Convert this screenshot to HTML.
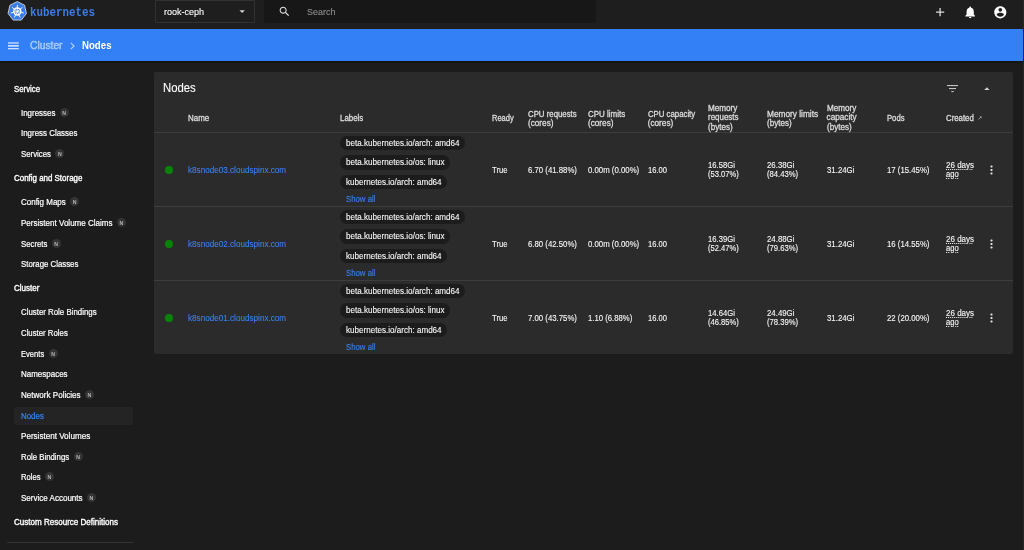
<!DOCTYPE html>
<html lang="en"><head><meta charset="utf-8"><title>Kubernetes Dashboard</title>
<style>
*{box-sizing:border-box;margin:0;padding:0}
html,body{width:1024px;height:550px;overflow:hidden;background:#1c1c1c;font-family:"Liberation Sans",Arial,sans-serif;color:#fff}
body{position:relative}
.abs,.t{position:absolute}
.t{white-space:nowrap;transform-origin:0 50%;-webkit-text-stroke:0.2px currentColor}
#txt{left:0;top:0;width:1024px;height:550px;will-change:transform}
#top{left:0;top:0;width:1024px;height:29px;background:#1e1e1e}
#bar{left:0;top:28.5px;width:1023.2px;height:32.2px;background:#3380f6;box-shadow:0 1px 2px -0.5px rgba(0,0,0,.5)}
.logo{font-family:"Liberation Mono",monospace;color:#3a7ce8}
#ns{left:155px;top:-0.2px;width:99.5px;height:23.2px;border:1px solid #323232;border-radius:1px}
#search{left:263.8px;top:0.3px;width:332.7px;height:22.6px;background:#171717;border-radius:1px}
.sh{color:#fff;-webkit-text-stroke:0.35px currentColor}
.si{color:#fff}
.sel{color:#3a80ee}
.nb{-webkit-text-stroke:0;width:9px;height:9px;border-radius:50%;background:#343434;color:#b4b4b4;font-size:5.2px;line-height:10.4px;overflow:hidden;text-align:center;font-weight:bold}
#selbg{left:14px;top:406.6px;width:119px;height:18.6px;background:#242424;border-radius:2px}
#card{left:153.5px;top:72px;width:859px;height:282px;background:#2b2b2b;border-radius:2px}
.hl{left:153.5px;width:859px;height:1px;background:#3d3d3d}
.th{color:#dcdcdc;-webkit-text-stroke:0.3px currentColor}
.td{color:#fafafa;-webkit-text-stroke:0.1px currentColor}
.lnk{color:#3a80ee}
.chip{left:340px;height:14.4px;border-radius:7.2px;background:#1c1c1c}
.dot{width:7.6px;height:7.6px;border-radius:50%;background:#078307;left:165px}
.ul{text-decoration:underline dotted;text-decoration-thickness:0.8px;text-underline-offset:0.6px}
</style></head><body>
<div class="abs" id="top"></div>
<div class="abs" style="left:1023px;top:0;width:1px;height:550px;background:#272727"></div>
<svg class="abs" style="left:0;top:0" width="40" height="28" viewBox="0 0 40 28">
<polygon points="17.25,1.56 24.60,5.23 26.42,13.47 21.33,20.08 13.17,20.08 8.08,13.47 9.90,5.23" fill="#3a7ce8" stroke="#e6e6e6" stroke-width="0.8" stroke-linejoin="round"/>
<circle cx="17.30" cy="11.50" r="3.500" fill="none" stroke="#fff" stroke-width="1.400"/>
<path d="M17.30 10.30L17.30 5.20M18.24 10.75L22.23 7.57M18.47 11.77L23.44 12.90M17.82 12.58L20.03 17.18M16.78 12.58L14.57 17.18M16.13 11.77L11.16 12.90M16.36 10.75L12.37 7.57" stroke="#fff" stroke-width="0.900" fill="none" stroke-linecap="round"/>
<circle cx="17.30" cy="11.50" r="1" fill="#fff"/>
</svg>
<div class="abs" id="ns"></div>
<svg class="abs" style="left:239.200px;top:9.800px" width="6.300" height="3.400" viewBox="0 0 7 4"><path d="M0.300 0.300H6.700L3.500 3.500Z" fill="#d0d0d0"/></svg>
<div class="abs" id="search"></div>
<svg class="abs" style="left:278.300px;top:5px" width="13" height="13" viewBox="0 0 24 24"><path fill="#e0e0e0" d="M15.500 14h-.79l-.28-.27C15.410 12.590 16 11.110 16 9.500 16 5.910 13.090 3 9.500 3S3 5.910 3 9.500 5.910 16 9.500 16c1.610 0 3.090-.59 4.230-1.570l.27.280v.790l5 4.990L20.490 19l-4.990-5zm-6 0C7.010 14 5 11.990 5 9.500S7.010 5 9.500 5 14 7.010 14 9.500 11.990 14 9.500 14z"/></svg>
<svg class="abs" style="left:933.100px;top:5px" width="14.200" height="14.200" viewBox="0 0 24 24"><path fill="#dcdcdc" d="M19 13.100h-5.900v5.900h-2.200v-5.900H5v-2.200h5.900V5h2.200v5.900H19v2.200z"/></svg>
<svg class="abs" style="left:962.800px;top:4.850px" width="14.400" height="14.400" viewBox="0 0 24 24"><path fill="#fff" d="M12 22c1.100 0 2-.9 2-2h-4c0 1.100.89 2 2 2zm6-6v-5c0-3.070-1.640-5.640-4.500-6.320V4c0-.83-.67-1.500-1.500-1.500s-1.500.67-1.500 1.500v.68C7.630 5.360 6 7.920 6 11v5l-2 2v1h16v-1l-2-2z"/></svg>
<svg class="abs" style="left:992.650px;top:4.700px" width="14.600" height="14.600" viewBox="0 0 24 24"><path fill="#fff" d="M12 2C6.480 2 2 6.480 2 12s4.480 10 10 10 10-4.480 10-10S17.520 2 12 2zm0 3c1.660 0 3 1.340 3 3s-1.340 3-3 3-3-1.340-3-3 1.340-3 3-3zm0 14.200c-2.500 0-4.710-1.280-6-3.220.03-1.990 4-3.080 6-3.080 1.990 0 5.970 1.090 6 3.080-1.290 1.940-3.500 3.220-6 3.220z"/></svg>
<div class="abs" id="bar"></div>
<svg class="abs" style="left:8.400px;top:41.500px" width="10.800" height="8" viewBox="0 0 10.800 8"><path d="M0 1H10.800M0 3.900H10.800M0 6.800H10.800" stroke="#fff" stroke-width="1.150"/></svg>
<svg class="abs" style="left:69.800px;top:41.800px" width="5" height="8" viewBox="0 0 5 8"><path d="M0.800 0.800L4 4L0.800 7.200" stroke="#b4d0fc" stroke-width="1.150" fill="none"/></svg>
<div class="abs" id="selbg"></div>

<div class="abs" style="left:7px;top:542px;width:126px;height:1px;background:#333"></div>
<div class="abs" id="card"></div>
<svg class="abs" style="left:947px;top:84.500px" width="11" height="8" viewBox="0 0 11 8"><path d="M0 0.600H11M2 3.600H9M4.300 6.600H6.700" stroke="#d4d4d4" stroke-width="1"/></svg>
<svg class="abs" style="left:984.400px;top:87.100px" width="5.800" height="3.400" viewBox="0 0 7 4"><path d="M3.500 0.200L6.900 3.800H0.100Z" fill="#d0d0d0"/></svg>
<svg class="abs" style="left:978px;top:115.500px" width="4" height="4" viewBox="0 0 4 4"><path d="M0.500 3.500L3 1M1.800 0.700H3.300V2.200" stroke="#bbb" stroke-width="0.700" fill="none"/></svg>
<div class="abs hl" style="top:131.700px"></div>
<div class="abs hl" style="top:205.7px"></div>
<div class="abs dot" style="top:166.2px"></div>
<div class="abs chip" style="top:135.6px;width:125.2px"></div>
<div class="abs chip" style="top:155.2px;width:110.2px"></div>
<div class="abs chip" style="top:174.8px;width:107.2px"></div>
<svg class="abs" style="left:990.300px;top:165.4px" width="3" height="10" viewBox="0 0 3 10"><rect x="0.450" y="0.450" width="2.100" height="2.100" rx="0.700" fill="#e4e4e4"/><rect x="0.450" y="3.950" width="2.100" height="2.100" rx="0.700" fill="#e4e4e4"/><rect x="0.450" y="7.450" width="2.100" height="2.100" rx="0.700" fill="#e4e4e4"/></svg>
<div class="abs hl" style="top:279.7px"></div>
<div class="abs dot" style="top:240.2px"></div>
<div class="abs chip" style="top:209.6px;width:125.2px"></div>
<div class="abs chip" style="top:229.2px;width:110.2px"></div>
<div class="abs chip" style="top:248.8px;width:107.2px"></div>
<svg class="abs" style="left:990.300px;top:239.4px" width="3" height="10" viewBox="0 0 3 10"><rect x="0.450" y="0.450" width="2.100" height="2.100" rx="0.700" fill="#e4e4e4"/><rect x="0.450" y="3.950" width="2.100" height="2.100" rx="0.700" fill="#e4e4e4"/><rect x="0.450" y="7.450" width="2.100" height="2.100" rx="0.700" fill="#e4e4e4"/></svg>
<div class="abs dot" style="top:314.2px"></div>
<div class="abs chip" style="top:283.6px;width:125.2px"></div>
<div class="abs chip" style="top:303.2px;width:110.2px"></div>
<div class="abs chip" style="top:322.8px;width:107.2px"></div>
<svg class="abs" style="left:990.300px;top:313.4px" width="3" height="10" viewBox="0 0 3 10"><rect x="0.450" y="0.450" width="2.100" height="2.100" rx="0.700" fill="#e4e4e4"/><rect x="0.450" y="3.950" width="2.100" height="2.100" rx="0.700" fill="#e4e4e4"/><rect x="0.450" y="7.450" width="2.100" height="2.100" rx="0.700" fill="#e4e4e4"/></svg>
<div class="abs" id="txt">
<div class="t logo" style="left:30.00px;top:5px;font-size:13.20px;line-height:15px;transform:scaleX(0.8207);font-weight:bold;-webkit-text-stroke:0;">kubernetes</div>
<div class="t " style="left:163.80px;top:7px;font-size:9.20px;line-height:10px;transform:scaleX(0.9826);-webkit-text-stroke:0.1px currentColor;">rook-ceph</div>
<div class="t " style="left:306.50px;top:7px;font-size:9.20px;line-height:10px;transform:scaleX(0.9742);color:#8f8f8f;-webkit-text-stroke:0.1px currentColor;">Search</div>
<div class="t " style="left:30.00px;top:39px;font-size:10.50px;line-height:12px;transform:scaleX(0.9772);color:#a9c9fb;-webkit-text-stroke:0.45px currentColor;">Cluster</div>
<div class="t " style="left:81.50px;top:39px;font-size:10.50px;line-height:12px;transform:scaleX(0.9193);font-weight:bold;-webkit-text-stroke:0;">Nodes</div>
<div class="t sh" style="left:13.80px;top:84px;font-size:8.30px;line-height:10px;transform:scaleX(0.9394);">Service</div>
<div class="t si" style="left:20.70px;top:108px;font-size:8.30px;line-height:10px;transform:scaleX(0.9560);">Ingresses</div>
<div class="abs nb" style="left:59.7px;top:107.9px">N</div>
<div class="t si" style="left:20.70px;top:128px;font-size:8.30px;line-height:10px;transform:scaleX(0.9552);">Ingress Classes</div>
<div class="t si" style="left:20.70px;top:149px;font-size:8.30px;line-height:10px;transform:scaleX(0.9426);">Services</div>
<div class="abs nb" style="left:55.3px;top:148.9px">N</div>
<div class="t sh" style="left:13.80px;top:173px;font-size:8.30px;line-height:10px;transform:scaleX(0.9563);">Config and Storage</div>
<div class="t si" style="left:20.70px;top:197px;font-size:8.30px;line-height:10px;transform:scaleX(0.9615);">Config Maps</div>
<div class="abs nb" style="left:70.1px;top:196.9px">N</div>
<div class="t si" style="left:20.70px;top:218px;font-size:8.30px;line-height:10px;transform:scaleX(0.9686);">Persistent Volume Claims</div>
<div class="abs nb" style="left:116.9px;top:217.9px">N</div>
<div class="t si" style="left:20.70px;top:239px;font-size:8.30px;line-height:10px;transform:scaleX(0.9382);">Secrets</div>
<div class="abs nb" style="left:51.7px;top:238.9px">N</div>
<div class="t si" style="left:20.70px;top:259px;font-size:8.30px;line-height:10px;transform:scaleX(0.9426);">Storage Classes</div>
<div class="t sh" style="left:13.80px;top:283px;font-size:8.30px;line-height:10px;transform:scaleX(0.9661);">Cluster</div>
<div class="t si" style="left:20.70px;top:307px;font-size:8.30px;line-height:10px;transform:scaleX(0.9472);">Cluster Role Bindings</div>
<div class="t si" style="left:20.70px;top:328px;font-size:8.30px;line-height:10px;transform:scaleX(0.9394);">Cluster Roles</div>
<div class="t si" style="left:20.70px;top:349px;font-size:8.30px;line-height:10px;transform:scaleX(0.9143);">Events</div>
<div class="abs nb" style="left:48.5px;top:348.9px">N</div>
<div class="t si" style="left:20.70px;top:369px;font-size:8.30px;line-height:10px;transform:scaleX(0.9620);">Namespaces</div>
<div class="t si" style="left:20.70px;top:390px;font-size:8.30px;line-height:10px;transform:scaleX(0.9715);">Network Policies</div>
<div class="abs nb" style="left:84.9px;top:389.9px">N</div>
<div class="t si sel" style="left:20.70px;top:411px;font-size:8.30px;line-height:10px;transform:scaleX(0.9545);">Nodes</div>
<div class="t si" style="left:20.70px;top:431px;font-size:8.30px;line-height:10px;transform:scaleX(0.9740);">Persistent Volumes</div>
<div class="t si" style="left:20.70px;top:452px;font-size:8.30px;line-height:10px;transform:scaleX(0.9411);">Role Bindings</div>
<div class="abs nb" style="left:73.5px;top:451.9px">N</div>
<div class="t si" style="left:20.70px;top:472px;font-size:8.30px;line-height:10px;transform:scaleX(0.9236);">Roles</div>
<div class="abs nb" style="left:44.9px;top:471.9px">N</div>
<div class="t si" style="left:20.70px;top:493px;font-size:8.30px;line-height:10px;transform:scaleX(0.9675);">Service Accounts</div>
<div class="abs nb" style="left:86.9px;top:492.9px">N</div>
<div class="t sh" style="left:13.80px;top:517px;font-size:8.30px;line-height:10px;transform:scaleX(0.9685);">Custom Resource Definitions</div>
<div class="t " style="left:163.30px;top:81px;font-size:12.00px;line-height:14px;transform:scaleX(0.9441);-webkit-text-stroke:0.1px currentColor;">Nodes</div>
<div class="t th" style="left:188.20px;top:114px;font-size:8.20px;line-height:9px;transform:scaleX(0.9715);">Name</div>
<div class="t th" style="left:340.00px;top:114px;font-size:8.20px;line-height:9px;transform:scaleX(0.9642);">Labels</div>
<div class="t th" style="left:491.50px;top:114px;font-size:8.20px;line-height:9px;transform:scaleX(0.9176);">Ready</div>
<div class="t th" style="left:528.00px;top:110px;font-size:8.20px;line-height:9px;transform:scaleX(0.9551);">CPU requests</div>
<div class="t th" style="left:528.00px;top:119px;font-size:8.20px;line-height:9px;">(cores)</div>
<div class="t th" style="left:588.00px;top:110px;font-size:8.20px;line-height:9px;transform:scaleX(0.9734);">CPU limits</div>
<div class="t th" style="left:588.00px;top:119px;font-size:8.20px;line-height:9px;">(cores)</div>
<div class="t th" style="left:647.75px;top:110px;font-size:8.20px;line-height:9px;transform:scaleX(0.9512);">CPU capacity</div>
<div class="t th" style="left:647.75px;top:119px;font-size:8.20px;line-height:9px;">(cores)</div>
<div class="t th" style="left:707.50px;top:104px;font-size:8.20px;line-height:9px;transform:scaleX(0.9928);">Memory</div>
<div class="t th" style="left:707.50px;top:113px;font-size:8.20px;line-height:9px;transform:scaleX(0.9729);">requests</div>
<div class="t th" style="left:707.50px;top:123px;font-size:8.20px;line-height:9px;transform:scaleX(0.9856);">(bytes)</div>
<div class="t th" style="left:766.90px;top:110px;font-size:8.20px;line-height:9px;transform:scaleX(1.0135);">Memory limits</div>
<div class="t th" style="left:766.90px;top:119px;font-size:8.20px;line-height:9px;transform:scaleX(0.9856);">(bytes)</div>
<div class="t th" style="left:826.60px;top:104px;font-size:8.20px;line-height:9px;transform:scaleX(0.9928);">Memory</div>
<div class="t th" style="left:826.60px;top:113px;font-size:8.20px;line-height:9px;">capacity</div>
<div class="t th" style="left:826.60px;top:123px;font-size:8.20px;line-height:9px;transform:scaleX(0.9856);">(bytes)</div>
<div class="t th" style="left:886.60px;top:114px;font-size:8.20px;line-height:9px;transform:scaleX(0.9363);">Pods</div>
<div class="t th" style="left:946.00px;top:114px;font-size:8.20px;line-height:9px;transform:scaleX(0.9529);">Created</div>
<div class="t td lnk" style="left:188.20px;top:166px;font-size:8.20px;line-height:9px;transform:scaleX(0.9932);">k8snode03.cloudspinx.com</div>
<div class="t td" style="left:345.75px;top:139px;font-size:8.20px;line-height:9px;transform:scaleX(0.9863);">beta.kubernetes.io/arch: amd64</div>
<div class="t td" style="left:345.75px;top:158px;font-size:8.20px;line-height:9px;transform:scaleX(0.9892);">beta.kubernetes.io/os: linux</div>
<div class="t td" style="left:345.75px;top:178px;font-size:8.20px;line-height:9px;transform:scaleX(0.9862);">kubernetes.io/arch: amd64</div>
<div class="t td lnk" style="left:345.75px;top:195px;font-size:8.20px;line-height:9px;transform:scaleX(0.9518);">Show all</div>
<div class="t td" style="left:491.50px;top:166px;font-size:8.20px;line-height:9px;transform:scaleX(0.9362);">True</div>
<div class="t td" style="left:528.00px;top:166px;font-size:8.20px;line-height:9px;transform:scaleX(0.9512);">6.70 (41.88%)</div>
<div class="t td" style="left:588.00px;top:166px;font-size:8.20px;line-height:9px;transform:scaleX(0.9529);">0.00m (0.00%)</div>
<div class="t td" style="left:647.75px;top:166px;font-size:8.20px;line-height:9px;transform:scaleX(0.9259);">16.00</div>
<div class="t td" style="left:707.50px;top:161px;font-size:8.20px;line-height:9px;transform:scaleX(0.9366);">16.58Gi</div>
<div class="t td" style="left:707.50px;top:170px;font-size:8.20px;line-height:9px;transform:scaleX(0.9287);">(53.07%)</div>
<div class="t td" style="left:766.90px;top:161px;font-size:8.20px;line-height:9px;transform:scaleX(0.9575);">26.38Gi</div>
<div class="t td" style="left:766.90px;top:170px;font-size:8.20px;line-height:9px;transform:scaleX(0.9377);">(84.43%)</div>
<div class="t td" style="left:826.60px;top:166px;font-size:8.20px;line-height:9px;transform:scaleX(0.9575);">31.24Gi</div>
<div class="t td" style="left:886.60px;top:166px;font-size:8.20px;line-height:9px;transform:scaleX(0.9514);">17 (15.45%)</div>
<div class="t td ul" style="left:946.00px;top:161px;font-size:8.20px;line-height:9px;transform:scaleX(0.9784);">26 days</div>
<div class="t td ul" style="left:946.00px;top:170px;font-size:8.20px;line-height:9px;transform:scaleX(0.9355);">ago</div>
<div class="t td lnk" style="left:188.20px;top:240px;font-size:8.20px;line-height:9px;transform:scaleX(0.9932);">k8snode02.cloudspinx.com</div>
<div class="t td" style="left:345.75px;top:213px;font-size:8.20px;line-height:9px;transform:scaleX(0.9863);">beta.kubernetes.io/arch: amd64</div>
<div class="t td" style="left:345.75px;top:232px;font-size:8.20px;line-height:9px;transform:scaleX(0.9892);">beta.kubernetes.io/os: linux</div>
<div class="t td" style="left:345.75px;top:252px;font-size:8.20px;line-height:9px;transform:scaleX(0.9862);">kubernetes.io/arch: amd64</div>
<div class="t td lnk" style="left:345.75px;top:269px;font-size:8.20px;line-height:9px;transform:scaleX(0.9518);">Show all</div>
<div class="t td" style="left:491.50px;top:240px;font-size:8.20px;line-height:9px;transform:scaleX(0.9362);">True</div>
<div class="t td" style="left:528.00px;top:240px;font-size:8.20px;line-height:9px;transform:scaleX(0.9512);">6.80 (42.50%)</div>
<div class="t td" style="left:588.00px;top:240px;font-size:8.20px;line-height:9px;transform:scaleX(0.9529);">0.00m (0.00%)</div>
<div class="t td" style="left:647.75px;top:240px;font-size:8.20px;line-height:9px;transform:scaleX(0.9259);">16.00</div>
<div class="t td" style="left:707.50px;top:235px;font-size:8.20px;line-height:9px;transform:scaleX(0.9366);">16.39Gi</div>
<div class="t td" style="left:707.50px;top:244px;font-size:8.20px;line-height:9px;transform:scaleX(0.9287);">(52.47%)</div>
<div class="t td" style="left:766.90px;top:235px;font-size:8.20px;line-height:9px;transform:scaleX(0.9575);">24.88Gi</div>
<div class="t td" style="left:766.90px;top:244px;font-size:8.20px;line-height:9px;transform:scaleX(0.9377);">(79.63%)</div>
<div class="t td" style="left:826.60px;top:240px;font-size:8.20px;line-height:9px;transform:scaleX(0.9575);">31.24Gi</div>
<div class="t td" style="left:886.60px;top:240px;font-size:8.20px;line-height:9px;transform:scaleX(0.9514);">16 (14.55%)</div>
<div class="t td ul" style="left:946.00px;top:235px;font-size:8.20px;line-height:9px;transform:scaleX(0.9784);">26 days</div>
<div class="t td ul" style="left:946.00px;top:244px;font-size:8.20px;line-height:9px;transform:scaleX(0.9355);">ago</div>
<div class="t td lnk" style="left:188.20px;top:314px;font-size:8.20px;line-height:9px;transform:scaleX(0.9932);">k8snode01.cloudspinx.com</div>
<div class="t td" style="left:345.75px;top:287px;font-size:8.20px;line-height:9px;transform:scaleX(0.9863);">beta.kubernetes.io/arch: amd64</div>
<div class="t td" style="left:345.75px;top:306px;font-size:8.20px;line-height:9px;transform:scaleX(0.9892);">beta.kubernetes.io/os: linux</div>
<div class="t td" style="left:345.75px;top:326px;font-size:8.20px;line-height:9px;transform:scaleX(0.9862);">kubernetes.io/arch: amd64</div>
<div class="t td lnk" style="left:345.75px;top:343px;font-size:8.20px;line-height:9px;transform:scaleX(0.9518);">Show all</div>
<div class="t td" style="left:491.50px;top:314px;font-size:8.20px;line-height:9px;transform:scaleX(0.9362);">True</div>
<div class="t td" style="left:528.00px;top:314px;font-size:8.20px;line-height:9px;transform:scaleX(0.9512);">7.00 (43.75%)</div>
<div class="t td" style="left:588.00px;top:314px;font-size:8.20px;line-height:9px;transform:scaleX(0.9435);">1.10 (6.88%)</div>
<div class="t td" style="left:647.75px;top:314px;font-size:8.20px;line-height:9px;transform:scaleX(0.9259);">16.00</div>
<div class="t td" style="left:707.50px;top:309px;font-size:8.20px;line-height:9px;transform:scaleX(0.9366);">14.64Gi</div>
<div class="t td" style="left:707.50px;top:318px;font-size:8.20px;line-height:9px;transform:scaleX(0.9287);">(46.85%)</div>
<div class="t td" style="left:766.90px;top:309px;font-size:8.20px;line-height:9px;transform:scaleX(0.9575);">24.49Gi</div>
<div class="t td" style="left:766.90px;top:318px;font-size:8.20px;line-height:9px;transform:scaleX(0.9377);">(78.39%)</div>
<div class="t td" style="left:826.60px;top:314px;font-size:8.20px;line-height:9px;transform:scaleX(0.9575);">31.24Gi</div>
<div class="t td" style="left:886.60px;top:314px;font-size:8.20px;line-height:9px;transform:scaleX(0.9514);">22 (20.00%)</div>
<div class="t td ul" style="left:946.00px;top:309px;font-size:8.20px;line-height:9px;transform:scaleX(0.9784);">26 days</div>
<div class="t td ul" style="left:946.00px;top:318px;font-size:8.20px;line-height:9px;transform:scaleX(0.9355);">ago</div>
</div>
</body></html>
